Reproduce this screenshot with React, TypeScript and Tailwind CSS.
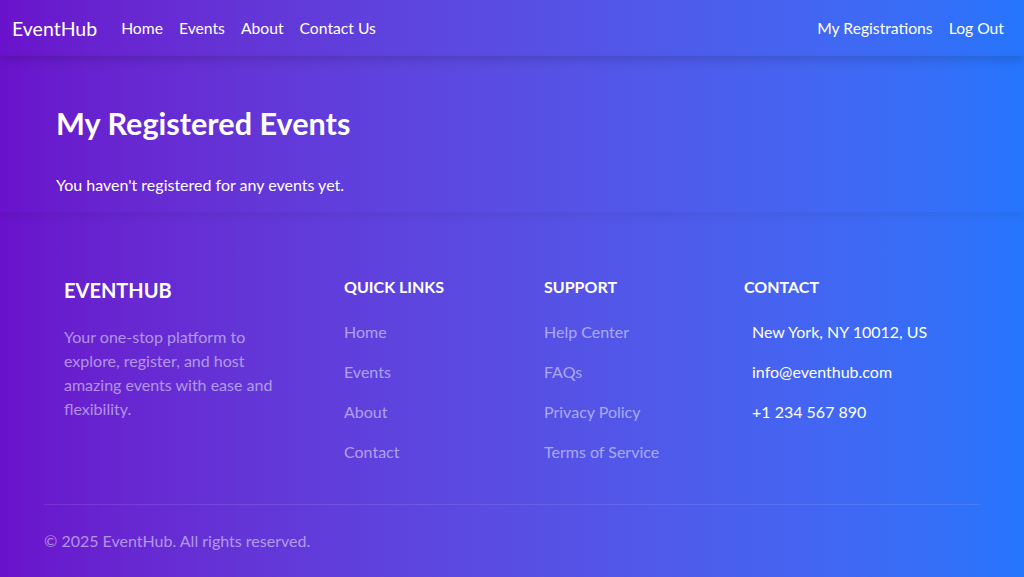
import React from "react";

const navLinks = ["Home", "Events", "About", "Contact Us"];
const quickLinks = ["Home", "Events", "About", "Contact"];
const supportLinks = ["Help Center", "FAQs", "Privacy Policy", "Terms of Service"];
const contactItems = ["New York, NY 10012, US", "info@eventhub.com", "+1 234 567 890"];

const App = () => {
  return (
    <div className="min-h-screen bg-gradient-to-r from-[#6a11cb] to-[#2575fc] text-white font-['Lato',sans-serif]">
      {/* navbar */}
      <nav className="relative z-20 flex h-14 items-center justify-between px-3 pt-[2px] shadow-[0_4px_10px_rgba(0,0,0,0.15)]">
        <div className="flex items-center">
          <span className="mr-4 text-[19.5px]">EventHub</span>
          <div className="flex">
            {navLinks.map((l) => (
              <a key={l} className="px-2 text-[15.7px]">
                {l}
              </a>
            ))}
          </div>
        </div>
        <div className="flex">
          <a className="px-2 text-[15.7px]">My Registrations</a>
          <a className="px-2 text-[15.7px]">Log Out</a>
        </div>
      </nav>

      {/* main */}
      <section className="relative z-10 h-[156px] px-[56px] pt-[49px] shadow-[0_4px_10px_rgba(0,0,0,0.06)]">
        <h1 className="text-[30.6px] font-bold leading-[38px]">My Registered Events</h1>
        <p className="mt-[30px] text-base leading-6">You haven't registered for any events yet.</p>
      </section>

      {/* footer */}
      <footer className="mx-[44px] pt-[64px] pb-6">
        <div className="flex">
          <div className="w-[280px] px-5">
            <h4 className="text-[20px] font-bold leading-[28px]">EVENTHUB</h4>
            <p className="mt-[21px] text-base leading-6 text-white/50">
              Your one-stop platform to explore, register, and host amazing events with ease and flexibility.
            </p>
          </div>
          <div className="w-[200px] px-5">
            <h5 className="text-base font-bold leading-[22px]">QUICK LINKS</h5>
            <ul className="mt-[22px] flex flex-col gap-4">
              {quickLinks.map((l) => (
                <li key={l} className="text-base leading-6 text-white/50">
                  {l}
                </li>
              ))}
            </ul>
          </div>
          <div className="w-[200px] px-5">
            <h5 className="text-base font-bold leading-[22px]">SUPPORT</h5>
            <ul className="mt-[22px] flex flex-col gap-4">
              {supportLinks.map((l) => (
                <li key={l} className="text-base leading-6 text-white/50">
                  {l}
                </li>
              ))}
            </ul>
          </div>
          <div className="flex-1 px-5">
            <h5 className="text-base font-bold leading-[22px]">CONTACT</h5>
            <ul className="mt-[22px] flex flex-col gap-4 pl-2">
              {contactItems.map((l) => (
                <li key={l} className="text-base leading-6">
                  {l}
                </li>
              ))}
            </ul>
          </div>
        </div>
        <div className="mt-[40px] border-t border-white/10 pt-[24px]">
          <p className="text-base leading-6 text-white/50">© 2025 EventHub. All rights reserved.</p>
        </div>
      </footer>
    </div>
  );
};

export default App;
